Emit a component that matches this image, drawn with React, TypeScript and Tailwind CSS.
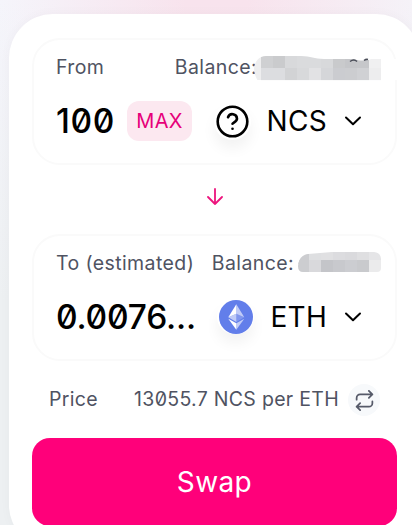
import type { ReactNode } from 'react';
import { cx } from 'class-variance-authority';

interface TokenPanelProps {
  label: string;
  amount: string;
  symbol: string;
  icon: ReactNode;
  hidden: ReactNode;
  amountClass: string;
  balanceClass: string;
  symbolClass: string;
  action?: ReactNode;
}

function HelpIcon() {
  return (
    <svg viewBox="0 0 24 24" className="h-[37px] w-[37px]" fill="none" stroke="#000" strokeWidth="1.7" strokeLinecap="round" strokeLinejoin="round">
      <circle cx="12" cy="12" r="9.6" />
      <path d="M9.1 9.2a3 3 0 0 1 5.8 1c0 2-2.9 2.6-2.9 3.3" />
      <path d="M12 16.7h.01" />
    </svg>
  );
}

function EthIcon() {
  return (
    <svg viewBox="0 0 34 34" className="h-[34px] w-[34px]">
      <circle cx="17" cy="17" r="17" fill="#627eea" />
      <path d="M17.3 4.2v9.5l8 3.6z" fill="#fff" fillOpacity=".6" />
      <path d="M17.3 4.2l-8 13.1 8-3.6z" fill="#fff" />
      <path d="M17.3 23.2v6.5l8-11z" fill="#fff" fillOpacity=".6" />
      <path d="M17.3 29.7v-6.5l-8-4.5z" fill="#fff" />
      <path d="M17.3 21.9l8-4.6-8-3.6z" fill="#fff" fillOpacity=".2" />
      <path d="M9.3 17.3l8 4.6v-8.2z" fill="#fff" fillOpacity=".6" />
    </svg>
  );
}

function Chevron() {
  return (
    <svg viewBox="0 0 18 10" className="h-[10px] w-[18px]" fill="none" stroke="#000" strokeWidth="2" strokeLinecap="round" strokeLinejoin="round">
      <path d="M2 1.5l7 6.8 7-6.8" />
    </svg>
  );
}

const FROM_CELLS = [
  ['#cfd0d2', '#cacbcd', '#d8d9db', '#dadbdd', '#dadbdd', '#d8d9db', '#c9cacc', '#c5c6c9', '#c6c7ca', '#f0f0f1'],
  ['#dcdde0', '#dcdde0', '#d2d3d5', '#d8d9db', '#e2e2e4', '#d5d6d9', '#cbccd0', '#cccdd0', '#d0d1d4', '#ededee'],
];

const TO_CELLS = [
  ['#cccdd0', '#dedfe1', '#e0e0e2', '#dcdcdf', '#dadadd', '#dfdfe1', '#e5e5e7'],
  ['#cccdd0', '#d9d9dc', '#c4c5c9', '#c8c9cd', '#cccdd1', '#c9cacd', '#ebebec'],
];

function HiddenFrom() {
  return (
    <svg viewBox="0 0 147 26" className="h-[26px] w-[147px]">
      <clipPath id="from-shape">
        <path d="M0 12C1 5 5 0 12 0h35c10 0 13 3 23 3h30c5 2 13 2 17 0h10v24H6C2 24 0 16 0 12z" />
      </clipPath>
      <rect x="126" y="3" width="21" height="21" fill="#fff" />
      <g clipPath="url(#from-shape)">
        <rect width="8" height="24" fill="#eeeeef" />
        {FROM_CELLS.map((row, y) =>
          row.map((fill, x) => <rect key={`${x}-${y}`} x={7 + x * 12} y={y * 12} width="12.1" height="12.1" fill={fill} />)
        )}
      </g>
      <path d="M96 5.5q4-3 7 0M110 4.5q2-1.5 4-1" fill="none" stroke="#4b4e59" strokeWidth="1.5" />
    </svg>
  );
}

function HiddenTo() {
  return (
    <svg viewBox="0 0 83 21" className="h-[21px] w-[83px]">
      <clipPath id="to-shape">
        <path d="M0 14C1 6 4 3 10 2L34 0h42q7 1 7 7v9q0 4-4 4H5Q0 20 0 14z" />
      </clipPath>
      <g clipPath="url(#to-shape)">
        {TO_CELLS.map((row, y) =>
          row.map((fill, x) => <rect key={`${x}-${y}`} x={-1 + x * 12} y={y * 8} width="12.1" height="12.1" fill={fill} />)
        )}
      </g>
    </svg>
  );
}

function TokenPanel({ label, amount, symbol, icon, hidden, amountClass, balanceClass, symbolClass, action }: TokenPanelProps) {
  return (
    <section className="relative h-[127px] rounded-[28px] border-2 border-[#fafafa] px-[22px] pt-[15px]">
      <div className="flex h-[26px] items-center justify-between text-[19.5px] tracking-[0.4px] text-[#4f5362]">
        <span>{label}</span>
        <span className={balanceClass}>Balance:</span>
      </div>
      {hidden}
      <div className="mt-[20px] flex h-[40px] items-center text-black">
        <span className={cx('text-[33.5px] font-medium', amountClass)}>{amount}</span>
        {action}
        <div className="ml-auto flex items-center">
          <span className="flex w-[37px] justify-center rounded-full shadow-[0_9px_14px_rgba(0,0,0,0.05)]">{icon}</span>
          <span className={cx('text-[28px] tracking-[0.3px]', symbolClass)}>{symbol}</span>
          <span className="mr-[11px]"><Chevron /></span>
        </div>
      </div>
    </section>
  );
}

export default function App() {
  return (
    <div className="h-[531px] w-[412px] overflow-hidden bg-white font-[Inter,sans-serif] whitespace-nowrap [font-feature-settings:'zero']">
      <div className="h-[525px] overflow-hidden bg-[linear-gradient(to_bottom,transparent,#edf0f2_300px),linear-gradient(to_right,#f5f5fb,#f8e3ed_45%,#f8e3ed_60%,#f5f2f8)] pt-[14px] pl-[9px]">
        <main className="h-[535px] w-[411px] rounded-[44px] bg-white px-[23px] pt-6 shadow-[0_0_12px_rgba(0,0,0,0.03)]">
          <div className="w-[365px]">
            <TokenPanel
              label="From"
              amount="100"
              symbol="NCS"
              icon={<HelpIcon />}
              amountClass="w-[59px] tracking-[0.6px]"
              balanceClass="mr-[116px]"
              symbolClass="ml-4 mr-[17px]"
              hidden={<div className="absolute top-[16px] left-[220px]"><HiddenFrom /></div>}
              action={
                <button className="ml-[12px] h-10 w-[65px] rounded-xl bg-[#fce8f0] text-[20px] tracking-[0.3px] text-[#e6007a]">MAX</button>
              }
            />
            <div className="flex h-[69px] items-center justify-center pb-[6px]">
              <svg viewBox="0 0 16 17" className="h-[17px] w-4" fill="none" stroke="#ed147d" strokeWidth="1.8" strokeLinecap="round" strokeLinejoin="round">
                <path d="M8 1v15M1 9l7 7 7-7" />
              </svg>
            </div>
            <TokenPanel
              label="To (estimated)"
              amount="0.0076..."
              symbol="ETH"
              icon={<EthIcon />}
              amountClass="tracking-[-0.2px]"
              balanceClass="mr-[79px]"
              symbolClass="ml-4 mr-[17px]"
              hidden={<div className="absolute top-[16px] left-[264px]"><HiddenTo /></div>}
            />
            <div className="mt-[23px] flex h-8 items-center justify-between pr-[17px] pl-[17px] text-[19.5px] tracking-[0.3px] text-[#4f5362]">
              <span>Price</span>
              <span className="flex items-center gap-[9px]">
                13055.7 NCS per ETH
                <span className="flex h-8 w-8 items-center justify-center rounded-full bg-[#f7f9fb]">
                  <svg viewBox="0 0 24 24" className="h-[21px] w-[21px]" fill="none" stroke="#565a69" strokeWidth="2" strokeLinecap="round" strokeLinejoin="round">
                    <path d="M17 1l4 4-4 4M3 11V9a4 4 0 0 1 4-4h14M7 23l-4-4 4-4M21 13v2a4 4 0 0 1-4 4H3" />
                  </svg>
                </span>
              </span>
            </div>
            <button className="mt-[22px] h-[88px] w-full rounded-[18px] bg-[#ff007a] text-[28px] tracking-[0.4px] text-white">Swap</button>
          </div>
        </main>
      </div>
    </div>
  );
}
